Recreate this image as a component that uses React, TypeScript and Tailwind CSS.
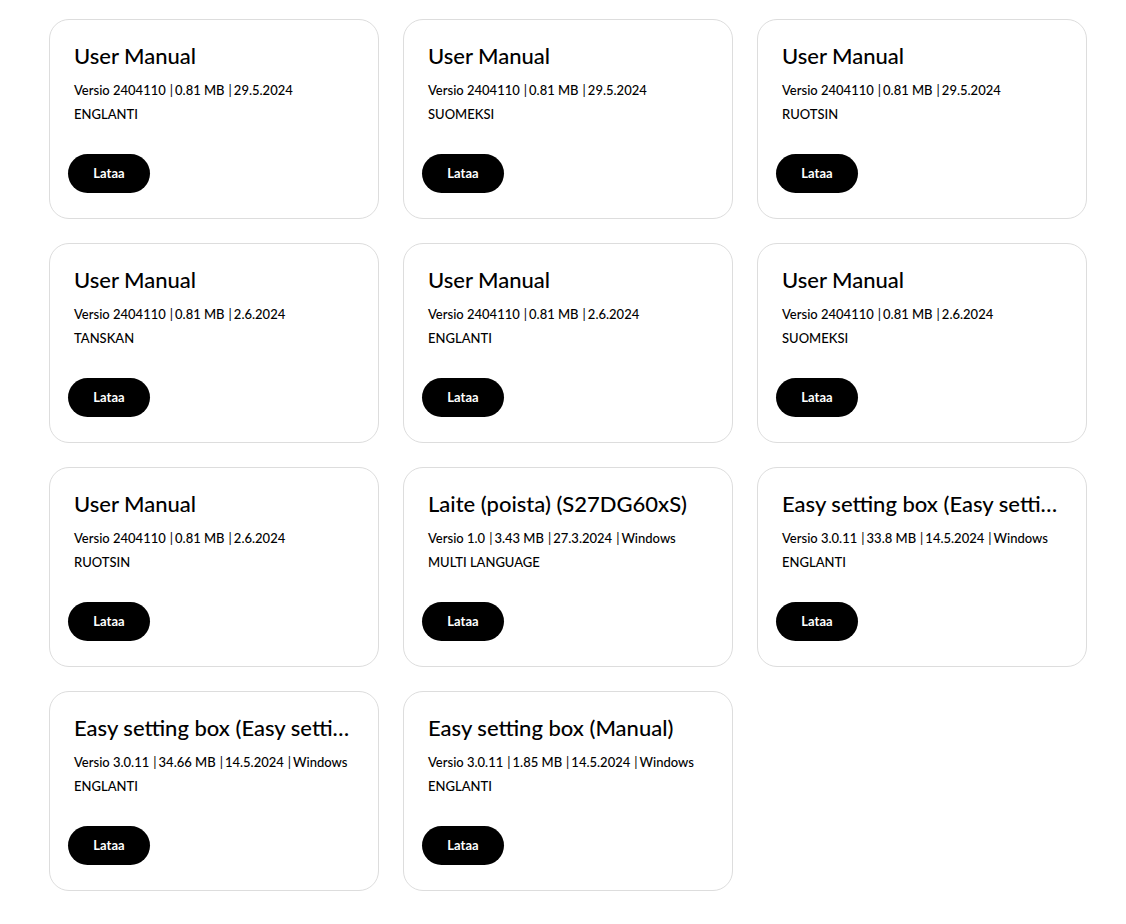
const items = [
  { title: 'User Manual', meta: ['Versio 2404110', '0.81 MB', '29.5.2024'], lang: 'ENGLANTI' },
  { title: 'User Manual', meta: ['Versio 2404110', '0.81 MB', '29.5.2024'], lang: 'SUOMEKSI' },
  { title: 'User Manual', meta: ['Versio 2404110', '0.81 MB', '29.5.2024'], lang: 'RUOTSIN' },
  { title: 'User Manual', meta: ['Versio 2404110', '0.81 MB', '2.6.2024'], lang: 'TANSKAN' },
  { title: 'User Manual', meta: ['Versio 2404110', '0.81 MB', '2.6.2024'], lang: 'ENGLANTI' },
  { title: 'User Manual', meta: ['Versio 2404110', '0.81 MB', '2.6.2024'], lang: 'SUOMEKSI' },
  { title: 'User Manual', meta: ['Versio 2404110', '0.81 MB', '2.6.2024'], lang: 'RUOTSIN' },
  { title: 'Laite (poista) (S27DG60xS)', meta: ['Versio 1.0', '3.43 MB', '27.3.2024', 'Windows'], lang: 'MULTI LANGUAGE' },
  { title: 'Easy setting box (Easy setting box)', meta: ['Versio 3.0.11', '33.8 MB', '14.5.2024', 'Windows'], lang: 'ENGLANTI' },
  { title: 'Easy setting box (Easy setting box)', meta: ['Versio 3.0.11', '34.66 MB', '14.5.2024', 'Windows'], lang: 'ENGLANTI' },
  { title: 'Easy setting box (Manual)', meta: ['Versio 3.0.11', '1.85 MB', '14.5.2024', 'Windows'], lang: 'ENGLANTI' },
];

export default function App() {
  return (
    <div className="min-h-screen bg-white text-black" style={{ fontFamily: 'Lato, "Noto Sans", sans-serif' }}>
      <div className="grid grid-cols-[repeat(3,330px)] gap-x-[24px] gap-y-[24px] pl-[49px] pt-[19px]">
        {items.map((item, i) => (
          <div key={i} className="h-[200px] rounded-[20px] border border-[#dddddd] pl-[24px] pr-[22px] pt-[21px]">
            <h3 className="truncate text-[22px] leading-[30px] font-medium">{item.title}</h3>
            <p className="mt-[7px] text-[13px] leading-[24px] font-medium">
              {item.meta.map((m, j) => (
                <span key={j}>
                  {j > 0 && <span className="ml-[4px] mr-[2px] font-normal">|</span>}
                  {m}
                </span>
              ))}
            </p>
            <p className="text-[13px] leading-[24px] font-medium">{item.lang}</p>
            <button className="-ml-[6px] mt-[28px] h-[39px] w-[82px] rounded-full bg-black text-[13px] font-bold text-white">
              Lataa
            </button>
          </div>
        ))}
      </div>
    </div>
  );
}
